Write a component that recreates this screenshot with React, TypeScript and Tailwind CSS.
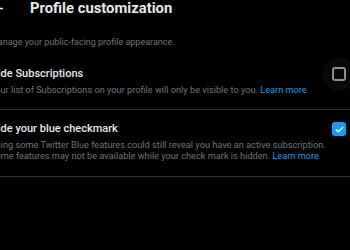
import React from 'react';

const Checkbox = ({ checked }: { checked: boolean }) => {
  if (checked) {
    return (
      <div className="flex h-[34px] w-[34px] items-center justify-center">
        <div className="flex h-[14px] w-[14px] items-center justify-center rounded-[3px] bg-[#1d9bf0]">
          <svg viewBox="0 0 24 24" className="h-[11px] w-[11px]" fill="none" stroke="white" strokeWidth={2.6} strokeLinecap="round" strokeLinejoin="round">
            <path d="M5 12.5l4.5 4.5L19 7.5" />
          </svg>
        </div>
      </div>
    );
  }
  return (
    <div className="flex h-[34px] w-[34px] items-center justify-center rounded-full bg-white/[0.03]">
      <div className="h-[14px] w-[14px] rounded-[3px] border-2 border-[#8b8f93]" />
    </div>
  );
};

const settings = [
  {
    titre: 'Hide Subscriptions',
    texte: 'Your list of Subscriptions on your profile will only be visible to you.',
    coche: false,
    espace: 'pt-[19px] pb-[14px]',
  },
  {
    titre: 'Hide your blue checkmark',
    texte:
      'Using some Twitter Blue features could still reveal you have an active subscription. Some features may not be available while your check mark is hidden.',
    coche: true,
    espace: 'pt-[12px] pb-[15px]',
  },
];

export default function App() {
  return (
    <div className="h-[250px] w-[350px] overflow-hidden bg-black font-['Roboto',sans-serif] text-[#e7e9ea]">
      <div className="-ml-[10px] w-[360px]">
        {/* header */}
        <div className="flex h-[16px] items-center">
          <svg viewBox="0 0 24 24" className="-ml-[2px] h-[17px] w-[17px] shrink-0" fill="#e7e9ea">
            <path d="M7.414 13l5.043 5.04-1.414 1.42L3.586 12l7.457-7.46 1.414 1.42L7.414 11H21v2H7.414z" />
          </svg>
          <h1 className="ml-[25px] text-[14.8px] font-bold leading-none">Profile customization</h1>
        </div>
        <p className="mt-[20px] text-[9px] leading-[12px] text-[#71767b]">
          Manage your public-facing profile appearance.
        </p>

        <div>
          {settings.map((s, i) => (
            <div key={i} className={`border-b border-[#2f3336] pr-[14px] ${s.espace}`}>
              <div className="flex h-[14px] items-center justify-between">
                <div className="text-[11px] font-medium leading-[14px]">{s.titre}</div>
                <div className="-mr-[20px] flex h-[14px] items-center">
                  <Checkbox checked={s.coche} />
                </div>
              </div>
              <p className="mt-[3px] pr-[10px] text-[9.2px] leading-[11px] text-[#71767b]">
                {s.texte} <span className="text-[#1d9bf0]">Learn more</span>
              </p>
            </div>
          ))}
        </div>
      </div>
    </div>
  );
}
